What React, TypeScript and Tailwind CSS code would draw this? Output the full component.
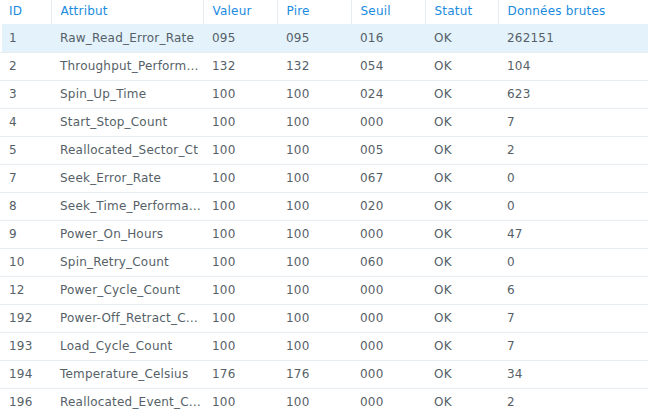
import React from 'react';

type Row = [string, string, string, string, string, string, string];

const rows: Row[] = [
  ['1', 'Raw_Read_Error_Rate', '095', '095', '016', 'OK', '262151'],
  ['2', 'Throughput_Performance', '132', '132', '054', 'OK', '104'],
  ['3', 'Spin_Up_Time', '100', '100', '024', 'OK', '623'],
  ['4', 'Start_Stop_Count', '100', '100', '000', 'OK', '7'],
  ['5', 'Reallocated_Sector_Ct', '100', '100', '005', 'OK', '2'],
  ['7', 'Seek_Error_Rate', '100', '100', '067', 'OK', '0'],
  ['8', 'Seek_Time_Performance', '100', '100', '020', 'OK', '0'],
  ['9', 'Power_On_Hours', '100', '100', '000', 'OK', '47'],
  ['10', 'Spin_Retry_Count', '100', '100', '060', 'OK', '0'],
  ['12', 'Power_Cycle_Count', '100', '100', '000', 'OK', '6'],
  ['192', 'Power-Off_Retract_Count', '100', '100', '000', 'OK', '7'],
  ['193', 'Load_Cycle_Count', '100', '100', '000', 'OK', '7'],
  ['194', 'Temperature_Celsius', '176', '176', '000', 'OK', '34'],
  ['196', 'Reallocated_Event_Count', '100', '100', '000', 'OK', '2'],
];

const headers = ['ID', 'Attribut', 'Valeur', 'Pire', 'Seuil', 'Statut', 'Données brutes'];
const widths = ['w-[51px]', 'w-[152px]', 'w-[74px]', 'w-[74px]', 'w-[74px]', 'w-[73px]', 'w-[150px]'];

export default function App() {
  return (
    <div className="w-[648px] h-[418px] bg-white overflow-hidden font-['DejaVu_Sans',Verdana,sans-serif] text-[12px] tracking-[0.2px]">
      <table className="table-fixed w-[648px] border-collapse">
        <colgroup>
          {widths.map((w, i) => (
            <col key={i} className={w} />
          ))}
        </colgroup>
        <thead>
          <tr className="h-[24px]">
            {headers.map((h, i) => (
              <th
                key={h}
                className={`text-left font-normal text-[#1b8be0] pl-[9px] align-middle pb-[3px] ${
                  i > 0 ? 'border-l border-[#e6ebf0]' : ''
                }`}
              >
                {h}
              </th>
            ))}
          </tr>
        </thead>
        <tbody>
          {rows.map((r, ri) => (
            <tr
              key={r[0]}
              className={`h-[28px] ${ri === 0 ? 'bg-[#e3f2fb]' : 'border-t border-[#e9eef3]'}`}
            >
              {r.map((c, ci) => (
                <td
                  key={ci}
                  className={`pl-[9px] pr-[2px] text-[#565f68] whitespace-nowrap overflow-hidden text-ellipsis align-middle ${
                    ri === 0 && ci === 0 ? 'shadow-[inset_2px_0_0_#ffffff]' : ''
                  }`}
                >
                  {c}
                </td>
              ))}
            </tr>
          ))}
        </tbody>
      </table>
    </div>
  );
}
